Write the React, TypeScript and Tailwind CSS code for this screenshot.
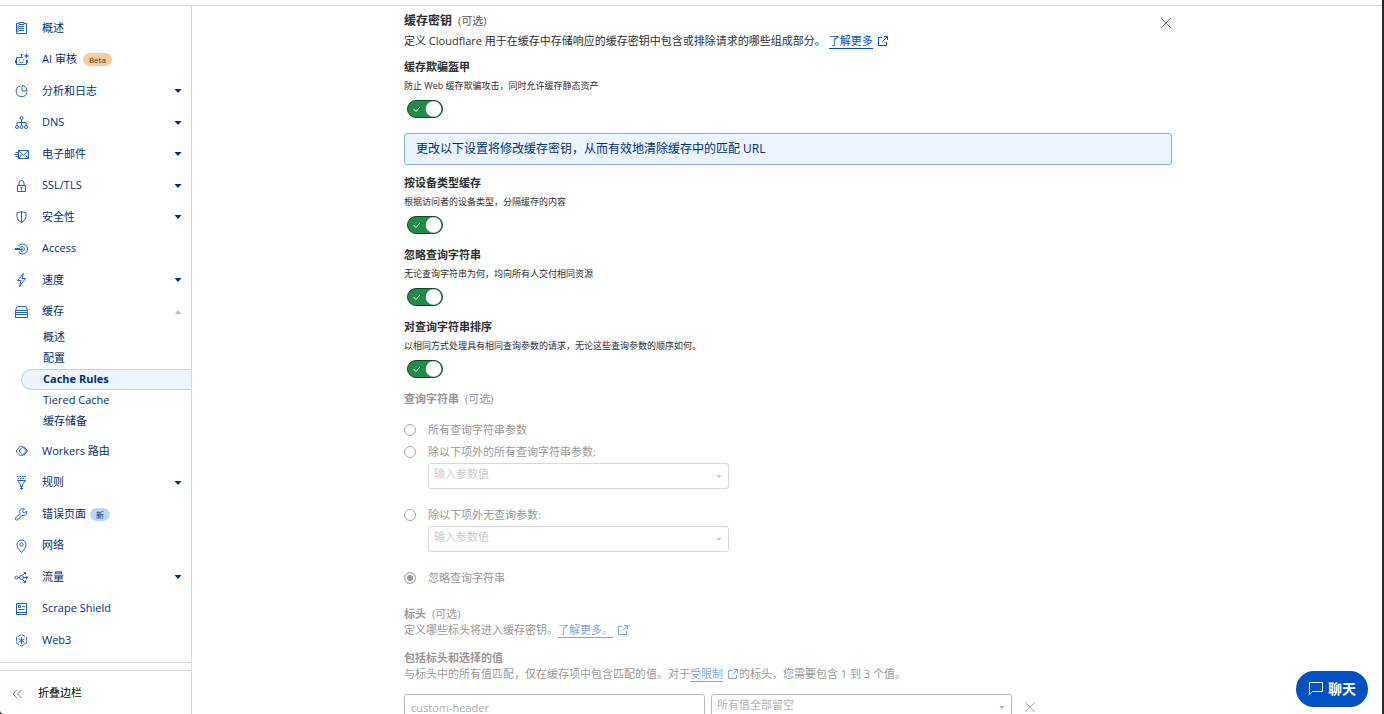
/**
 * Cache rule editor
 * -----------------------------------------------------------------------------
 * Zone dashboard shell (sidebar + scrolling form) showing the cache key section
 * of a cache rule: toggles, query string options and header matching.
 * -----------------------------------------------------------------------------
 */

import { useState } from "react";
import type { ReactNode } from "react";

interface NavEntry {
    label: string;
    icon: ReactNode;
    badge?: { text: string; tone: "beta" | "new" };
    expandable?: boolean;
    children?: string[];
}

const NAV: NavEntry[] = [
    {
        label: "概述",
        icon: (
            <>
                <path d="M5 3.5H2.5v10h10v-10H10" />
                <path d="M5 2.5h5v2H5zM5 6.5h5M5 8.5h5M5 10.5h5M4 5v7" />
            </>
        ),
    },
    {
        label: "AI 审核",
        badge: { text: "Beta", tone: "beta" },
        icon: (
            <>
                <path d="M9 5.5H2.5v7h10V8M7.5 5.5V3M6.5 2.5h2M1.5 8v3M13.5 8v3" />
                <path d="M5.5 7.5v1M9.500 7.5v1M5.5 10q2 1.500 4 0" />
                <path
                    d="M12.500 1l.8 2.200 2.200.8-2.200.8-.8 2.200-.8-2.200-2.200-.8 2.200-.8z"
                    fill="currentColor"
                    stroke="none"
                />
            </>
        ),
    },
    {
        label: "分析和日志",
        expandable: true,
        icon: (
            <>
                <path d="M6.5 3a5.400 5.400 0 1 0 6.400 6.400" />
                <path d="M8 2.500v5.500h5a5 5.500 0 0 0-5-5.500z" />
            </>
        ),
    },
    {
        label: "DNS",
        expandable: true,
        icon: (
            <>
                <circle cx="7.5" cy="3" r="1.5" />
                <circle cx="3" cy="12" r="1.5" />
                <circle cx="7.5" cy="12" r="1.5" />
                <circle cx="12" cy="12" r="1.5" />
                <path d="M7.5 4.5v6M3 10.5v-3h9v3" />
            </>
        ),
    },
    {
        label: "电子邮件",
        expandable: true,
        icon: (
            <>
                <path d="M4.5 4.500h10v8h-10z" />
                <path d="M4.5 4.500l5 4.500 5-4.500M4.500 12.500L8 8.500M14.500 12.500L11 8.500M1.500 6.500h3M.5 8.500h4M1.500 10.500h3" />
            </>
        ),
    },
    {
        label: "SSL/TLS",
        expandable: true,
        icon: (
            <>
                <path d="M3.500 7.500h8v6h-8zM5 7.500V5a2.500 2.500 0 0 1 5 0v2.500" />
                <path d="M7.500 9.500v3M6.500 9.500h2" />
            </>
        ),
    },
    {
        label: "安全性",
        expandable: true,
        icon: (
            <path d="M3 3.500q3 0 4.500-1 1.500 1 4.500 1v4q0 4-4.500 6-4.500-2-4.500-6zM7.500 2.500v11" />
        ),
    },
    {
        label: "Access",
        icon: (
            <>
                <path d="M4.500 5a5 5 0 1 1 0 6" />
                <path d="M7 5.800a2.400 2.400 0 1 1 0 4.400M.5 8.500h8M1 7.500h5M6 5.500l2.500 2.500L6 10.500" />
            </>
        ),
    },
    {
        label: "速度",
        expandable: true,
        icon: <path d="M9.500 1.500l-6 7h3.500l-1.500 6 6-8H8z" />,
    },
    {
        label: "缓存",
        expandable: true,
        children: ["概述", "配置", "Cache Rules", "Tiered Cache", "缓存储备"],
        icon: (
            <>
                <path d="M1.500 6.500l1.500-4h9l1.500 4v2h-12z" />
                <path d="M1.500 6.500h12M1.500 10.500h12v3h-12zM1.500 8.500v2M13.500 8.500v2" />
            </>
        ),
    },
    {
        label: "Workers 路由",
        icon: (
            <>
                <path d="M6.500 3L2 8l4.500 5L8 11.500 5 8l3-3.500z" />
                <path d="M8 3l4.500 5L8 13M10 3.500L13.500 8 10 12.500" />
            </>
        ),
    },
    {
        label: "规则",
        expandable: true,
        icon: (
            <>
                <path d="M3.500 5.500h8l-3 4v2h-2v-2zM7.500 11.500v3M6 13l1.500 1.500L9 13" />
                <path d="M3 1.500h9M3.500 3.500h8" strokeDasharray="1.500 1" />
            </>
        ),
    },
    {
        label: "错误页面",
        badge: { text: "新", tone: "new" },
        icon: (
            <path d="M12.500 5L10.500 7 9 6.500 8.500 5l2-2q-2.500-1-4 .7T6 7.500L1.500 12q-.5 1 .3 1.700t1.700.3L8 9.500q2.300.6 3.900-.8T12.500 5zM3 12.500h.5" />
        ),
    },
    {
        label: "网络",
        icon: (
            <>
                <path d="M7.500 14.500C5 11.500 3 9.500 3 6.500a4.500 4.500 0 0 1 9 0c0 3-2 5-4.500 8z" />
                <circle cx="7.500" cy="6.500" r="1.700" />
            </>
        ),
    },
    {
        label: "流量",
        expandable: true,
        icon: (
            <>
                <circle cx="2.500" cy="8.500" r="1.500" />
                <circle cx="7.500" cy="8.500" r="2" />
                <path d="M4 8.500h1.500M9.500 8.500h4M8.500 6.500l3-3M8.500 10.500l3 3M9.500 3.500h2v2M9.500 13.500h2v-2M12 7l1.500 1.500L12 10" />
            </>
        ),
    },
    {
        label: "Scrape Shield",
        icon: (
            <>
                <path d="M2.500 2.500h10v11h-10zM2.500 11.500h10" />
                <path d="M4.500 4.500h2v2h-2zM8 5.500h3M4.500 8.500h6" />
            </>
        ),
    },
    {
        label: "Web3",
        icon: (
            <>
                <path d="M7.500 2.500l5 2.800v5.900l-5 2.800-5-2.800V5.300z" strokeDasharray="4 1" />
                <path d="M7.500 5v7M4.500 6.700l6 3.600M10.500 6.700l-6 3.600" />
            </>
        ),
    },
];

const ACTIVE_CHILD = "Cache Rules";

function NavIcon({ children }: { children: ReactNode }) {
    return (
        <svg
            viewBox="0 0 16 16"
            className="size-4 shrink-0 text-[#1f62c4]"
            fill="none"
            stroke="currentColor"
            aria-hidden="true"
        >
            {children}
        </svg>
    );
}

function Caret({ className }: { className?: string }) {
    return (
        <svg viewBox="0 0 8 4" className={className} fill="currentColor" aria-hidden="true">
            <path d="M.5 0h7L4 4z" />
        </svg>
    );
}

function Cross() {
    return (
        <svg viewBox="0 0 12 12" className="size-3" fill="none" stroke="currentColor" strokeWidth=".8" aria-hidden="true">
            <path d="M1 1l10 10M11 1L1 11" />
        </svg>
    );
}

function ExternalLink({ children }: { children: ReactNode }) {
    return (
        <a href="#" className="inline-flex items-center gap-1 text-[#0051c3]">
            <span className="border-b border-current leading-[15px]">{children}</span>
            <svg viewBox="0 0 12 12" className="size-3" fill="none" stroke="currentColor" aria-hidden="true">
                <path d="M5 2.500H1.500v8h8V7M7 1.500h3.500V5M10.500 1.500l-5 5" />
            </svg>
        </a>
    );
}

function Sidebar() {
    return (
        <aside className="flex w-48 shrink-0 flex-col border-r border-[#d5d7d8]">
            <nav className="mb-[7px] min-h-0 flex-1 overflow-hidden border-b border-[#d5d7d8] pt-1.5 text-[#003070]">
                <ul>
                    {NAV.map((item) => (
                        <li key={item.label} className="group/item">
                            <a
                                href="#"
                                className="flex h-[31px] items-center pr-[9px] pl-3.5 group-odd/item:h-8"
                            >
                                <NavIcon>{item.icon}</NavIcon>
                                <span className="ml-3">{item.label}</span>
                                {item.badge?.tone === "beta" && (
                                    <span className="ml-1.5 rounded-full bg-[#fbcb9f] px-1.5 text-[8px] leading-[13px] text-[#5c3510]">
                                        {item.badge.text}
                                    </span>
                                )}
                                {item.badge?.tone === "new" && (
                                    <span className="ml-1 rounded-full bg-[#b9d6ff] px-1.5 text-[8px] leading-[13px]">
                                        {item.badge.text}
                                    </span>
                                )}
                                {item.expandable && (
                                    <Caret
                                        className={
                                            item.children
                                                ? "ml-auto h-1 w-2 rotate-180 text-[#b8bfc8]"
                                                : "ml-auto h-1 w-2"
                                        }
                                    />
                                )}
                            </a>
                            {item.children && (
                                <ul className="mb-[3px]">
                                    {item.children.map((child) => (
                                        <li key={child} className="pl-[21px]">
                                            <a
                                                href="#"
                                                className={
                                                    child === ACTIVE_CHILD
                                                        ? "flex h-[21px] items-center rounded-l-full border border-r-0 border-[#b9d2f2] bg-[#ebf4ff] pl-[21px] font-bold"
                                                        : "flex h-[21px] items-center pl-[22px]"
                                                }
                                            >
                                                {child}
                                            </a>
                                        </li>
                                    ))}
                                </ul>
                            )}
                        </li>
                    ))}
                </ul>
            </nav>
            <button
                type="button"
                className="flex h-11 shrink-0 items-center gap-4 border-t border-[#d5d7d8] pt-0.5 pl-3 text-black"
            >
                <svg viewBox="0 0 10 10" className="size-2.5 text-[#1f62c4]" fill="none" stroke="currentColor" strokeWidth=".8" aria-hidden="true">
                    <path d="M5 1L1 5l4 4M9.500 1l-4 4 4 4" />
                </svg>
                折叠边栏
            </button>
        </aside>
    );
}

interface ToggleFieldProps {
    id: string;
    title: string;
    hint: string;
}

function ToggleField({ id, title, hint }: ToggleFieldProps) {
    const [on, setOn] = useState(true);

    return (
        <div>
            <label htmlFor={id} className="block leading-5 font-bold">
                {title}
            </label>
            <p className="text-[9px] leading-[18px]">{hint}</p>
            <div className="relative mt-[5px] ml-[3px] h-[18px] w-9">
                <input
                    id={id}
                    type="checkbox"
                    role="switch"
                    checked={on}
                    onChange={(e) => setOn(e.target.checked)}
                    className="block h-[18px] w-9 appearance-none rounded-full border border-[#0f4a26] bg-[#b6b6b6] checked:bg-[#228b49]"
                />
                <svg
                    viewBox="0 0 36 18"
                    className="pointer-events-none absolute inset-0 h-[18px] w-9"
                    fill="none"
                    aria-hidden="true"
                >
                    {on && <path d="M6.500 9L9 11.500 13 7" stroke="white" />}
                    <circle cx={on ? 26.5 : 9.5} cy="9" r="7.800" fill="white" />
                </svg>
            </div>
        </div>
    );
}

interface RadioRowProps {
    label: string;
    checked?: boolean;
}

function RadioRow({ label, checked }: RadioRowProps) {
    return (
        <label className="flex h-[22px] items-center gap-3">
            <input
                type="radio"
                name="query-string"
                defaultChecked={checked}
                disabled
                className="size-3 appearance-none rounded-full border border-[#555] bg-white checked:bg-[#333] checked:shadow-[inset_0_0_0_2px_white]"
            />
            {label}
        </label>
    );
}

interface SelectBoxProps {
    label: string;
    placeholder: string;
    muted?: boolean;
}

function SelectBox({ label, placeholder, muted }: SelectBoxProps) {
    return (
        <div className="relative w-[301px]">
            <select
                aria-label={label}
                disabled
                className={
                    muted
                        ? "block h-[26px] w-full appearance-none rounded-[3px] border border-[#b5b5b5] bg-white px-[5px] pb-1 text-[#999] opacity-100"
                        : "block h-[26px] w-full appearance-none rounded-[3px] border border-[#777] bg-white px-[5px] pb-1 text-[#666] opacity-100"
                }
            >
                <option>{placeholder}</option>
            </select>
            <Caret
                className={
                    muted
                        ? "absolute top-3 right-[7px] h-[3px] w-1.5 text-[#999]"
                        : "absolute top-3 right-[7px] h-[3px] w-1.5 text-[#666]"
                }
            />
        </div>
    );
}

export default function App() {
    return (
        <div className="h-screen overflow-hidden bg-[#26282b] font-['Open_Sans','Noto_Sans_CJK_SC',sans-serif] text-[11px] text-[#2c2e30]">
            <div className="flex h-full flex-col overflow-hidden rounded-bl-[4px] bg-white pt-[5px]">
                <div className="flex min-h-0 flex-1 border-t border-[#d5d7d8]">
                    <Sidebar />

                    <main className="min-w-0 flex-1 overflow-y-auto pt-[5px] [scrollbar-width:none]">
                        <div className="mx-auto max-w-[768px] pb-10">
                            <header className="flex items-start justify-between">
                                <div>
                                    <h2 className="text-[12px] leading-5 font-bold">
                                        缓存密钥
                                        <span className="ml-1.5 text-[11px] font-normal text-[#555]">(可选)</span>
                                    </h2>
                                    <p className="leading-5">
                                        定义 Cloudflare 用于在缓存中存储响应的缓存密钥中包含或排除请求的哪些组成部分。{" "}
                                        <ExternalLink>了解更多</ExternalLink>
                                    </p>
                                </div>
                                <button type="button" aria-label="关闭" className="mt-1.5 text-[#444]">
                                    <Cross />
                                </button>
                            </header>

                            <div className="mt-1.5">
                                <ToggleField
                                    id="deception-armor"
                                    title="缓存欺骗盔甲"
                                    hint="防止 Web 缓存欺骗攻击，同时允许缓存静态资产"
                                />
                            </div>

                            <p className="mt-[15px] mb-2 rounded-[3px] border border-[#82b0e8] bg-[#ebf4ff] px-[11px] text-[12px] leading-[30px] text-[#003070]">
                                更改以下设置将修改缓存密钥，从而有效地清除缓存中的匹配 URL
                            </p>

                            <div className="flex flex-col gap-[11px]">
                                <ToggleField
                                    id="device-type"
                                    title="按设备类型缓存"
                                    hint="根据访问者的设备类型，分隔缓存的内容"
                                />
                                <ToggleField
                                    id="ignore-query"
                                    title="忽略查询字符串"
                                    hint="无论查询字符串为何，均向所有人交付相同资源"
                                />
                                <ToggleField
                                    id="sort-query"
                                    title="对查询字符串排序"
                                    hint="以相同方式处理具有相同查询参数的请求，无论这些查询参数的顺序如何。"
                                />
                            </div>

                            <fieldset className="mt-[11px] opacity-50">
                                <legend className="mb-2.5 leading-5 font-bold">
                                    查询字符串
                                    <span className="ml-1.5 font-normal">(可选)</span>
                                </legend>
                                <RadioRow label="所有查询字符串参数" />
                                <RadioRow label="除以下项外的所有查询字符串参数:" />
                                <div className="mb-[15px] pl-6">
                                    <SelectBox label="排除的参数" placeholder="输入参数值" muted />
                                </div>
                                <RadioRow label="除以下项外无查询参数:" />
                                <div className="mb-[15px] pl-6">
                                    <SelectBox label="包含的参数" placeholder="输入参数值" muted />
                                </div>
                                <RadioRow label="忽略查询字符串" checked />
                            </fieldset>

                            <section className="mt-[17px] leading-4 opacity-50">
                                <h3 className="font-bold">
                                    标头
                                    <span className="ml-1.5 font-normal">(可选)</span>
                                </h3>
                                <p>
                                    定义哪些标头将进入缓存密钥。
                                    <ExternalLink>了解更多。</ExternalLink>
                                </p>
                                <h3 className="mt-3 font-bold">包括标头和选择的值</h3>
                                <p>
                                    与标头中的所有值匹配，仅在缓存项中包含匹配的值。对于
                                    <ExternalLink>受限制</ExternalLink>
                                    的标头，您需要包含 1 到 3 个值。
                                </p>
                                <div className="mt-3 flex items-center gap-1.5">
                                    <input
                                        aria-label="标头名称"
                                        placeholder="custom-header"
                                        disabled
                                        className="h-[26px] w-[301px] rounded-[3px] border border-[#777] bg-white px-1.5 placeholder:text-[#555]"
                                    />
                                    <SelectBox label="标头值" placeholder="所有值全部留空" />
                                    <button type="button" aria-label="删除" disabled className="ml-1.5">
                                        <Cross />
                                    </button>
                                </div>
                            </section>
                        </div>
                    </main>
                </div>
            </div>

            <div className="pointer-events-none fixed inset-y-0 right-0 w-0.5 bg-[#26282b]" />

            <button
                type="button"
                className="fixed right-4 bottom-[7px] flex h-9 w-[72px] items-center justify-center gap-1 rounded-full bg-[#0051c3] pb-0.5 text-[14px] font-bold text-white"
            >
                <svg viewBox="0 0 16 16" className="size-4" fill="none" stroke="currentColor" aria-hidden="true">
                    <path d="M1.500 2.500h13v9h-10l-3 3z" />
                </svg>
                聊天
            </button>
        </div>
    );
}
